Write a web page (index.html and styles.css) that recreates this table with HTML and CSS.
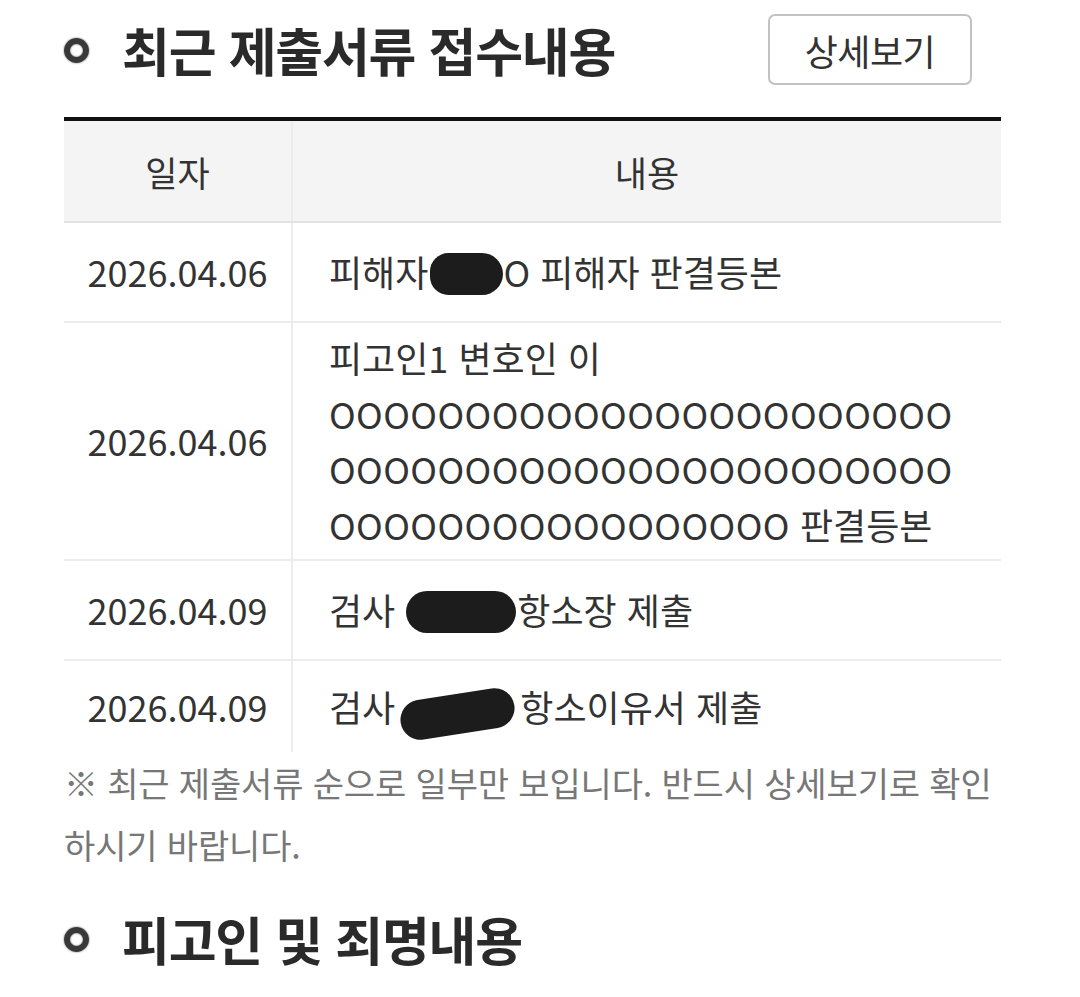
FILE: index.html
```html
<!DOCTYPE html>
<html lang="ko">
<head>
<meta charset="utf-8">
<title>최근 제출서류 접수내용</title>
<link rel="stylesheet" href="styles.css">
</head>
<body>
<div class="page">
  <div class="section-head">
    <h2 class="title"><span class="bullet"></span>최근 제출서류 접수내용</h2>
    <button class="btn-detail" type="button">상세보기</button>
  </div>

  <table class="doc-table">
    <colgroup>
      <col class="col-date">
      <col class="col-content">
    </colgroup>
    <thead>
      <tr>
        <th>일자</th>
        <th>내용</th>
      </tr>
    </thead>
    <tbody>
      <tr>
        <td class="date">2026.04.06</td>
        <td class="content">피해자<span class="redact r1"></span>O 피해자 판결등본</td>
      </tr>
      <tr>
        <td class="date">2026.04.06</td>
        <td class="content">피고인1 변호인 이<br><span class="oo">OOOOOOOOOOOOOOOOOOOOOOO</span><br><span class="oo">OOOOOOOOOOOOOOOOOOOOOOO</span><br><span class="oo">OOOOOOOOOOOOOOOOO</span> 판결등본</td>
      </tr>
      <tr>
        <td class="date">2026.04.09</td>
        <td class="content">검사 <span class="redact r3"></span>항소장 제출</td>
      </tr>
      <tr class="last">
        <td class="date">2026.04.09</td>
        <td class="content">검사 <span class="redact r4"></span>항소이유서 제출</td>
      </tr>
    </tbody>
  </table>

  <p class="note">※ 최근 제출서류 순으로 일부만 보입니다. 반드시 상세보기로 확인 하시기 바랍니다.</p>

  <div class="section-head second">
    <h2 class="title"><span class="bullet"></span>피고인 및 죄명내용</h2>
  </div>
</div>
</body>
</html>
```

FILE: styles.css
```css
* { box-sizing: border-box; }

html, body {
  margin: 0;
  padding: 0;
  background: #ffffff;
}

body {
  font-family: "Noto Sans CJK KR", "Noto Sans", sans-serif;
  color: #333333;
}

.page {
  width: 937px;
  margin-left: 64px;
}

.section-head {
  display: flex;
  align-items: center;
  justify-content: space-between;
  padding: 14px 29px 0 0;
  margin-bottom: 32px;
}

.title {
  display: flex;
  align-items: center;
  margin: 0;
  font-size: 52px;
  font-weight: 700;
  color: #2a2a2a;
  letter-spacing: -1.2px;
  line-height: 71px;
}

.bullet {
  display: inline-block;
  width: 25px;
  height: 25px;
  border: 6.5px solid #383838;
  border-radius: 50%;
  margin: 2px 33px 0 0;
  flex: none;
  box-shadow: 0 0 2px #666666, inset 0 0 2px #666666;
}

.btn-detail {
  width: 204px;
  height: 71px;
  background: #ffffff;
  border: 2px solid #c2c2c2;
  border-radius: 7px;
  font-family: inherit;
  font-size: 36px;
  color: #333333;
  padding: 0;
  letter-spacing: -0.5px;
}

.doc-table {
  width: 937px;
  border-collapse: collapse;
  border-top: 4px solid #111111;
}

.col-date { width: 228px; }

.doc-table th {
  height: 103px;
  background: #f4f4f4;
  font-weight: 400;
  font-size: 35px;
  color: #333333;
  border-bottom: 2px solid #e2e2e2;
  padding: 0;
}

.doc-table th:first-child,
.doc-table td.date {
  border-right: 2px solid #ececec;
}

.doc-table td {
  height: 100px;
  padding: 7px 0;
  font-size: 36px;
  line-height: 55.5px;
  color: #333333;
  border-bottom: 2px solid #ececec;
  vertical-align: middle;
}

.doc-table tr.last td {
  height: 92px;
  border-bottom: none;
}

.doc-table td.date {
  text-align: center;
  font-size: 36px;
}

.doc-table td.content {
  padding-left: 36px;
  white-space: nowrap;
}

.oo {
  letter-spacing: 0.4px;
}

.redact {
  display: inline-block;
  background: #1c1c1c;
  vertical-align: middle;
}

.redact.r1 {
  width: 73px;
  height: 42px;
  border-radius: 21px 24px 24px 21px;
  margin: -6px 0 0 2px;
}

.redact.r3 {
  width: 110px;
  height: 42px;
  border-radius: 21px;
  margin: -6px 1px 0 1px;
}

.redact.r4 {
  width: 115px;
  height: 40px;
  border-radius: 20px;
  margin: 0 5px 0 -5px;
  transform: translateY(2px) rotate(-9deg);
}

.note {
  margin: 0;
  padding-top: 0;
  font-size: 34px;
  line-height: 62px;
  color: #777777;
  letter-spacing: -0.15px;
  word-break: keep-all;
}

.section-head.second {
  padding-top: 27px;
  margin-bottom: 0;
}
```
